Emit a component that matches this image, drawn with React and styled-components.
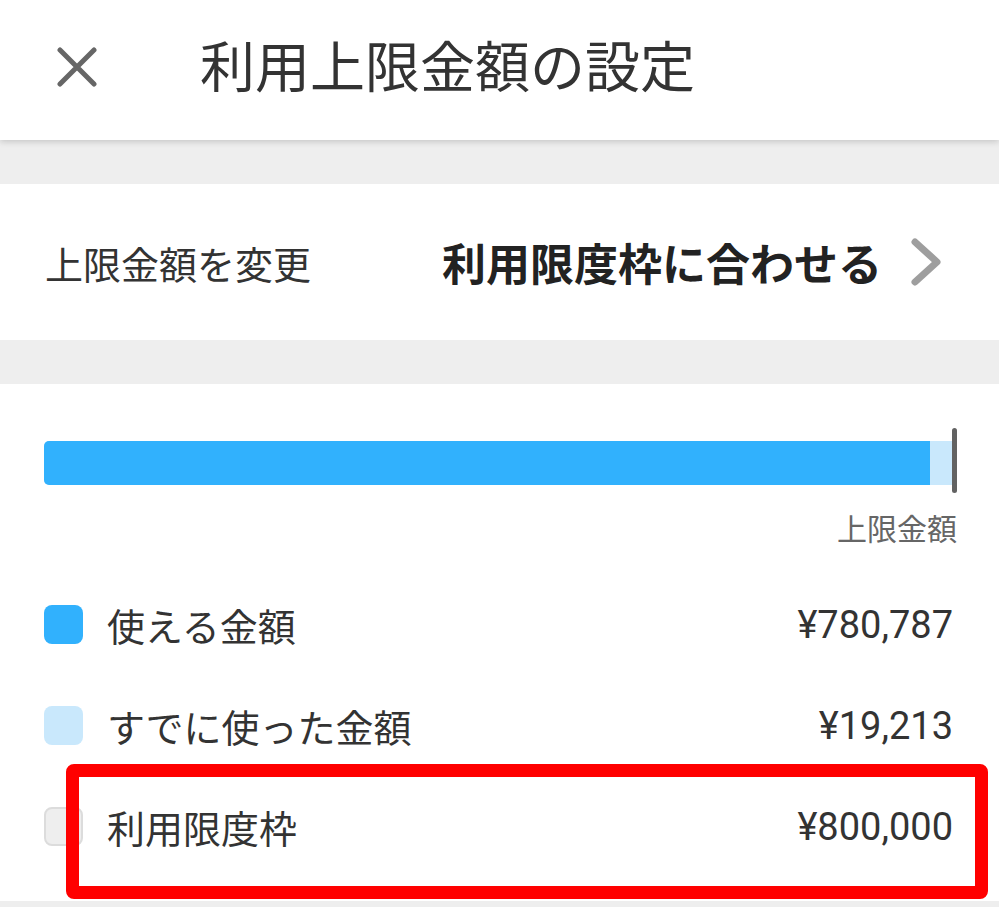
import React from "react";
import styled, { createGlobalStyle } from "styled-components";

const Global = createGlobalStyle`
  html, body { margin: 0; padding: 0; background: #eeeeee; }
  body { font-family: Roboto, "Noto Sans CJK JP", sans-serif; color: #333; }
  * { box-sizing: border-box; }
`;

const Page = styled.div`
  position: relative;
  width: 999px;
  min-height: 907px;
  background: #eeeeee;
`;

const Header = styled.header`
  position: relative;
  z-index: 1;
  height: 140px;
  background: #fff;
  display: flex;
  align-items: center;
  padding-left: 56px;
  box-shadow: 0 2px 6px rgba(0, 0, 0, 0.16);
`;

const CloseBtn = styled.button`
  border: 0;
  background: none;
  padding: 0;
  width: 42px;
  height: 42px;
  display: flex;
  align-items: center;
  justify-content: center;
  margin-top: -6px;
`;

const Title = styled.h1`
  margin: 0 0 0 102px;
  font-size: 55px;
  font-weight: 400;
  color: #333;
  line-height: 1;
  margin-top: -4px;
`;

const Section = styled.section`
  background: #fff;
  margin-top: ${(p) => p.$gap}px;
`;

const SettingRow = styled.div`
  height: 156px;
  display: flex;
  align-items: center;
  justify-content: space-between;
  padding: 0 57px 0 45px;
`;

const SettingLabel = styled.span`
  font-size: 38px;
  color: #333;
`;

const SettingValue = styled.span`
  display: flex;
  align-items: center;
  gap: 28px;
  font-size: 44px;
  font-weight: 700;
  color: #222;
`;

const ChartBody = styled.div`
  padding: 44px 42px 24px 44px;
`;

const BarRow = styled.div`
  display: flex;
  align-items: center;
  height: 65px;
`;

const Track = styled.div`
  flex: 1;
  height: 44px;
  display: flex;
  background: #c9e8fc;
  border-radius: 5px 0 0 5px;
  overflow: hidden;
  margin-top: 4px;
`;

const Fill = styled.div`
  height: 100%;
  background: #31b1fd;
`;

const Marker = styled.div`
  width: 5px;
  height: 65px;
  border-radius: 3px;
  background: #626262;
`;

const LimitLabel = styled.div`
  text-align: right;
  font-size: 30px;
  line-height: 42px;
  color: #666;
  margin-top: 16px;
`;

const Legend = styled.ul`
  list-style: none;
  margin: 23px 0 0;
  padding: 0 4px 0 0;
`;

const LegendRow = styled.li`
  position: relative;
  height: 101px;
  display: flex;
  align-items: center;
`;

const Swatch = styled.span`
  width: 39px;
  height: 39px;
  border-radius: 8px;
  background: ${(p) => p.$color};
  border: ${(p) => (p.$outlined ? "2px solid #dcdcdc" : "none")};
  margin-right: 24px;
  flex: none;
`;

const LegendLabel = styled.span`
  flex: 1;
  font-size: 38px;
  color: #333;
`;

const Amount = styled.span`
  font-size: 38px;
  color: #333;
  font-family: Roboto, sans-serif;
`;

const Highlight = styled.div`
  position: absolute;
  left: 22px;
  right: -35px;
  top: -12px;
  bottom: -22px;
  border: 13px solid #ff0000;
  border-radius: 8px;
  pointer-events: none;
`;

const CloseIcon = () => (
  <svg width="40" height="40" viewBox="0 0 40 40">
    <path d="M3 3 L37 37 M37 3 L3 37" stroke="#666" strokeWidth="5" strokeLinecap="round" />
  </svg>
);

const Chevron = () => (
  <svg width="32" height="50" viewBox="0 0 32 50">
    <path d="M5 5 L27 25 L5 45" fill="none" stroke="#9e9e9e" strokeWidth="7" strokeLinecap="round" strokeLinejoin="round" />
  </svg>
);

const items = [
  { label: "使える金額", amount: "¥780,787", color: "#31b1fd" },
  { label: "すでに使った金額", amount: "¥19,213", color: "#c9e8fc" },
  { label: "利用限度枠", amount: "¥800,000", color: "#eeeeee", outlined: true, highlight: true },
];

export default function App() {
  const used = 19213;
  const available = 780787;
  const limit = 800000;
  return (
    <Page>
      <Global />
      <Header>
        <CloseBtn aria-label="閉じる">
          <CloseIcon />
        </CloseBtn>
        <Title>利用上限金額の設定</Title>
      </Header>
      <Section $gap={44}>
        <SettingRow>
          <SettingLabel>上限金額を変更</SettingLabel>
          <SettingValue>
            利用限度枠に合わせる
            <Chevron />
          </SettingValue>
        </SettingRow>
      </Section>
      <Section $gap={44}>
        <ChartBody>
          <BarRow>
            <Track>
              <Fill style={{ width: `${(available / limit) * 100}%` }} />
            </Track>
            <Marker />
          </BarRow>
          <LimitLabel>上限金額</LimitLabel>
          <Legend>
            {items.map((it) => (
              <LegendRow key={it.label}>
                <Swatch $color={it.color} $outlined={it.outlined} />
                <LegendLabel>{it.label}</LegendLabel>
                <Amount>{it.amount}</Amount>
                {it.highlight && <Highlight />}
              </LegendRow>
            ))}
          </Legend>
        </ChartBody>
      </Section>
    </Page>
  );
}
